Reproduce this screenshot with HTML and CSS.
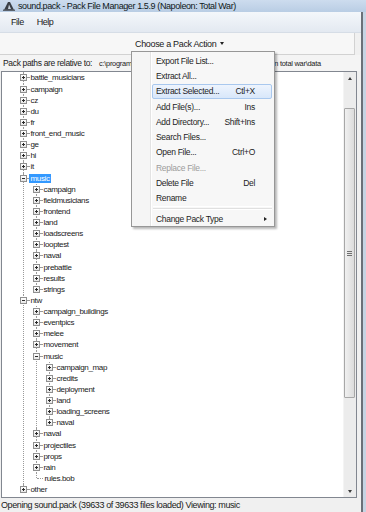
FILE: index.html
```html
<!doctype html>
<html>

<head>
    <meta charset="utf8">
    <title>Pack File Manager</title>
    <link rel="stylesheet" href="styles.css">
</head>

<body>
    <div class="screen">
        <div class="titlebar">
            <svg class="appicon" width="12" height="10" viewBox="0 0 12 10">
                <path d="M1 9 L5 1 L7 1 L11 9 Z" fill="#3a3f46" />
                <path d="M5 8 L6 3.5 L8 8 Z" fill="#c9d3de" />
                <rect x="0" y="8.5" width="12" height="1.5" fill="#5b636d" />
            </svg>
            <span class="title">sound.pack - Pack File Manager 1.5.9 (Napoleon: Total War)</span>
        </div>
        <div class="frame">
            <div class="window">
                <div class="menubar"><span>File</span><span>Help</span></div>
                <div class="toolstrip">
                    <span class="action">Choose a Pack Action <i class="caret"></i></span>
                </div>
                <div class="pathrow">
                    <span class="pathlabel">Pack paths are relative to:</span>
                    <span class="pathval">c:\program files (x86)\steam\steamapps\common\napoleon total war\data</span>
                </div>
                <div class="treebox">
                    <div class="tree">
                        <ul>
                            <li><div class="row"><b class="box plus"></b><i class="dash"></i><span class="lbl">battle_musicians</span></div></li>
                            <li><div class="row"><b class="box plus"></b><i class="dash"></i><span class="lbl">campaign</span></div></li>
                            <li><div class="row"><b class="box plus"></b><i class="dash"></i><span class="lbl">cz</span></div></li>
                            <li><div class="row"><b class="box plus"></b><i class="dash"></i><span class="lbl">du</span></div></li>
                            <li><div class="row"><b class="box plus"></b><i class="dash"></i><span class="lbl">fr</span></div></li>
                            <li><div class="row"><b class="box plus"></b><i class="dash"></i><span class="lbl">front_end_music</span></div></li>
                            <li><div class="row"><b class="box plus"></b><i class="dash"></i><span class="lbl">ge</span></div></li>
                            <li><div class="row"><b class="box plus"></b><i class="dash"></i><span class="lbl">hi</span></div></li>
                            <li><div class="row"><b class="box plus"></b><i class="dash"></i><span class="lbl">it</span></div></li>
                            <li>
                                <div class="row"><b class="box"></b><i class="dash"></i><span class="lbl sel">music</span></div>
                                <ul>
                                    <li><div class="row"><b class="box plus"></b><i class="dash"></i><span class="lbl">campaign</span></div></li>
                                    <li><div class="row"><b class="box plus"></b><i class="dash"></i><span class="lbl">fieldmusicians</span></div></li>
                                    <li><div class="row"><b class="box plus"></b><i class="dash"></i><span class="lbl">frontend</span></div></li>
                                    <li><div class="row"><b class="box plus"></b><i class="dash"></i><span class="lbl">land</span></div></li>
                                    <li><div class="row"><b class="box plus"></b><i class="dash"></i><span class="lbl">loadscreens</span></div></li>
                                    <li><div class="row"><b class="box plus"></b><i class="dash"></i><span class="lbl">looptest</span></div></li>
                                    <li><div class="row"><b class="box plus"></b><i class="dash"></i><span class="lbl">naval</span></div></li>
                                    <li><div class="row"><b class="box plus"></b><i class="dash"></i><span class="lbl">prebattle</span></div></li>
                                    <li><div class="row"><b class="box plus"></b><i class="dash"></i><span class="lbl">results</span></div></li>
                                    <li><div class="row"><b class="box plus"></b><i class="dash"></i><span class="lbl">strings</span></div></li>
                                </ul>
                            </li>
                            <li>
                                <div class="row"><b class="box"></b><i class="dash"></i><span class="lbl">ntw</span></div>
                                <ul>
                                    <li><div class="row"><b class="box plus"></b><i class="dash"></i><span class="lbl">campaign_buildings</span></div></li>
                                    <li><div class="row"><b class="box plus"></b><i class="dash"></i><span class="lbl">eventpics</span></div></li>
                                    <li><div class="row"><b class="box plus"></b><i class="dash"></i><span class="lbl">melee</span></div></li>
                                    <li><div class="row"><b class="box plus"></b><i class="dash"></i><span class="lbl">movement</span></div></li>
                                    <li>
                                        <div class="row"><b class="box"></b><i class="dash"></i><span class="lbl">music</span></div>
                                        <ul>
                                            <li><div class="row"><b class="box plus"></b><i class="dash"></i><span class="lbl">campaign_map</span></div></li>
                                            <li><div class="row"><b class="box plus"></b><i class="dash"></i><span class="lbl">credits</span></div></li>
                                            <li><div class="row"><b class="box plus"></b><i class="dash"></i><span class="lbl">deployment</span></div></li>
                                            <li><div class="row"><b class="box plus"></b><i class="dash"></i><span class="lbl">land</span></div></li>
                                            <li><div class="row"><b class="box plus"></b><i class="dash"></i><span class="lbl">loading_screens</span></div></li>
                                            <li><div class="row"><b class="box plus"></b><i class="dash"></i><span class="lbl">naval</span></div></li>
                                        </ul>
                                    </li>
                                    <li><div class="row"><b class="box plus"></b><i class="dash"></i><span class="lbl">naval</span></div></li>
                                    <li><div class="row"><b class="box plus"></b><i class="dash"></i><span class="lbl">projectiles</span></div></li>
                                    <li><div class="row"><b class="box plus"></b><i class="dash"></i><span class="lbl">props</span></div></li>
                                    <li><div class="row"><b class="box plus"></b><i class="dash"></i><span class="lbl">rain</span></div></li>
                                    <li><div class="row"><i class="dash leaf"></i><span class="lbl">rules.bob</span></div></li>
                                </ul>
                            </li>
                            <li><div class="row"><b class="box plus"></b><i class="dash"></i><span class="lbl">other</span></div></li>
                        </ul>
                    </div>
                    <div class="vscroll">
                        <div class="sb-btn"><i class="arrow up"></i></div>
                        <div class="track"><div class="thumb"><i class="grip"></i></div></div>
                        <div class="sb-btn"><i class="arrow down"></i></div>
                    </div>
                </div>
                <div class="statusbar">Opening sound.pack (39633 of 39633 files loaded) Viewing: music</div>
            </div>
            <div class="rightframe"></div>
        </div>

        <div class="dropmenu">
            <div class="item">Export File List...</div>
            <div class="item">Extract All...</div>
            <div class="item hot">Extract Selected...<span class="key">Ctl+X</span></div>
            <div class="item">Add File(s)...<span class="key">Ins</span></div>
            <div class="item">Add Directory...<span class="key">Shift+Ins</span></div>
            <div class="item">Search Files...</div>
            <div class="item">Open File...<span class="key">Ctrl+O</span></div>
            <div class="item off">Replace File...</div>
            <div class="item">Delete File<span class="key">Del</span></div>
            <div class="item">Rename</div>
            <div class="sep"></div>
            <div class="item">Change Pack Type<i class="sub"></i></div>
        </div>
    </div>
</body>

</html>
```

FILE: styles.css
```css
* {
    font-family: "Liberation Sans", Arial, sans-serif;
    box-sizing: border-box;
}
html,
body {
    margin: 0px;
    padding: 0px;
    background-color: #f0f0f0;
}

.screen {
    position: relative;
    width: 366px;
    height: 512px;
    overflow: hidden;
    color: #1a1a1a;
}

/* window caption */
.titlebar {
    height: 12px;
    display: flex;
    align-items: center;
    background: linear-gradient(#cddcee, #b9cde4);
}
.appicon {
    margin-left: 3px;
    margin-right: 3px;
}
.title {
    font-size: 9px;
    letter-spacing: -0.4px;
    color: #101820;
}

.frame {
    display: flex;
    height: 500px;
}
.window {
    width: 361px;
    display: flex;
    flex-direction: column;
}
.rightframe {
    width: 5px;
    border-left: 2px solid #6b7078;
    background-color: #c6d4e3;
}

/* menu + toolstrip */
.menubar {
    height: 21px;
    display: flex;
    align-items: center;
    padding-left: 4.5px;
    background: linear-gradient(#f4f7fb, #e3e9f1);
    border-bottom: 1px solid #d6dde6;
}
.menubar span {
    font-size: 9px;
    letter-spacing: -0.45px;
    padding: 0px 6.5px;
}

.toolstrip {
    height: 22px;
    display: flex;
    align-items: center;
    padding-left: 135px;
    margin-right: 6px;
    background-color: #f7f7f7;
    border-bottom: 1px solid #d2d2d2;
    border-right: 1px solid #d2d2d2;
}
.action {
    font-size: 9px;
    letter-spacing: -0.33px;
    display: flex;
    align-items: center;
}
.caret {
    margin-left: 4px;
    border-left: 2px solid transparent;
    border-right: 2px solid transparent;
    border-top: 3px solid #222;
}

.pathrow {
    height: 16px;
    display: flex;
    align-items: center;
    padding-left: 3px;
    background-color: #f4f4f4;
    white-space: nowrap;
}
.pathlabel {
    font-size: 8.5px;
    letter-spacing: -0.34px;
    width: 96px;
}
.pathval {
    font-size: 7.4px;
    letter-spacing: -0.25px;
}

/* tree view */
.treebox {
    height: 427px;
    margin: 0px 4px 0px 1px;
    border: 1px solid #828790;
    background-color: #fff;
    display: flex;
}
.tree {
    flex: 1;
    overflow: hidden;
    padding-top: 0.4px;
}
.tree ul {
    list-style: none;
    margin: 0px;
    padding: 0px 0px 0px 13px;
}
.tree > ul {
    padding-left: 18px;
}
.tree li {
    position: relative;
}
.tree li::before {
    content: '';
    position: absolute;
    left: 3px;
    top: 0px;
    bottom: 0px;
    border-left: 1px dotted #9a9a9a;
}
.tree li:last-child::before {
    bottom: auto;
    height: 5.5px;
}
.row {
    height: 11.13px;
    display: flex;
    align-items: center;
}
.box {
    position: relative;
    z-index: 1;
    width: 7px;
    height: 7px;
    border: 1px solid #8f8f8f;
    background: linear-gradient(#fff, #e6e6e6);
}
.box::before {
    content: '';
    position: absolute;
    left: 1px;
    top: 2px;
    width: 3px;
    height: 1px;
    background-color: #2a2a2a;
}
.box.plus::after {
    content: '';
    position: absolute;
    left: 2px;
    top: 1px;
    width: 1px;
    height: 3px;
    background-color: #2a2a2a;
}
.dash {
    width: 2px;
    border-top: 1px dotted #9a9a9a;
}
.dash.leaf {
    margin-left: 4px;
    width: 6px;
}
.lbl {
    font-size: 8px;
    letter-spacing: -0.35px;
    line-height: 9px;
    padding: 0px 1.5px;
    white-space: nowrap;
}
.lbl.sel {
    background-color: #3399ff;
    color: #fff;
}

/* scrollbar */
.vscroll {
    width: 13px;
    display: flex;
    flex-direction: column;
    background-color: #ececec;
    border-left: 1px solid #f4f4f4;
}
.sb-btn {
    height: 12px;
    display: flex;
    align-items: center;
    justify-content: center;
}
.arrow {
    border-left: 2.5px solid transparent;
    border-right: 2.5px solid transparent;
}
.arrow.up {
    border-bottom: 3px solid #3c3c3c;
}
.arrow.down {
    border-top: 3px solid #3c3c3c;
}
.track {
    flex: 1;
}
.thumb {
    margin: 24px 1px 0px 0px;
    height: 290px;
    border: 1px solid #a7a7a7;
    border-radius: 1px;
    background: linear-gradient(to right, #f0f0f0, #dcdcdc);
    display: flex;
    align-items: center;
    justify-content: center;
}
.grip {
    width: 5px;
    height: 5px;
    background: repeating-linear-gradient(#6f6f6f 0px, #6f6f6f 1px, transparent 1px, transparent 2px);
}

.statusbar {
    height: 14px;
    display: flex;
    align-items: center;
    padding-left: 1px;
    font-size: 9px;
    letter-spacing: -0.4px;
    white-space: nowrap;
    background-color: #f0f0f0;
}

/* dropped-down action menu */
.dropmenu {
    position: absolute;
    left: 131px;
    top: 51px;
    width: 144px;
    padding: 1px 0px 0px;
    border: 1px solid #979797;
    background: linear-gradient(to right, #f5f5f5 18px, #e3e3e3 18px, #e3e3e3 19px, #fff 19px, #fff 20px, #f7f7f7 20px);
    box-shadow: 2px 2px 2px rgba(0, 0, 0, 0.28);
}
.item {
    height: 15.3px;
    margin: 0px 2px 0px 20px;
    padding: 0px 16px 0px 3px;
    border: 1px solid transparent;
    border-radius: 2px;
    display: flex;
    align-items: center;
    font-size: 8.5px;
    letter-spacing: -0.3px;
    color: #1e1e1e;
    white-space: nowrap;
}
.item .key {
    margin-left: auto;
}
.item.hot {
    border-color: #a9c8ee;
    background: linear-gradient(#eef4fd, #d8e7fa);
}
.item.off {
    color: #9c9c9c;
}
.item .sub {
    margin-left: auto;
    margin-right: -12px;
    border-top: 2.5px solid transparent;
    border-bottom: 2.5px solid transparent;
    border-left: 3px solid #222;
}
.sep {
    height: 5px;
    margin: 0px 2px 0px 21px;
    border-top: 2px solid transparent;
    background: linear-gradient(#e0e0e0 1px, #fff 1px, #fff 2px, transparent 2px);
}
```
